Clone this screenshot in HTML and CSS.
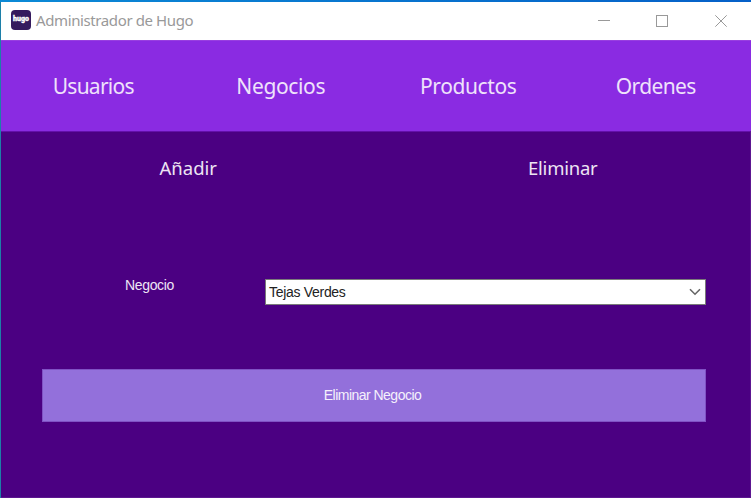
FILE: index.html
```html
<!DOCTYPE html>
<html lang="es">
<head>
<meta charset="utf-8">
<title>Administrador de Hugo</title>
<link rel="stylesheet" href="styles.css">
</head>
<body>
<div class="window">
  <header class="titlebar">
    <span class="logo">hugo</span>
    <span class="title">Administrador de Hugo</span>
    <div class="controls">
      <svg width="12" height="12" viewBox="0 0 12 12" shape-rendering="crispEdges"><path d="M0 5.5H12"/></svg>
      <svg width="12" height="12" viewBox="0 0 12 12" shape-rendering="crispEdges"><path d="M.5 .5H11.5V11.5H.5Z"/></svg>
      <svg width="12" height="12" viewBox="0 0 12 12"><path d="M.3 .3L11.7 11.7M11.7 .3L.3 11.7"/></svg>
    </div>
  </header>
  <nav class="nav">
    <a class="usuarios">Usuarios</a><a class="negocios">Negocios</a><a class="productos">Productos</a><a class="ordenes">Ordenes</a>
  </nav>
  <main class="panel">
    <div class="tabs"><a class="anadir">Añadir</a><a class="eliminar">Eliminar</a></div>
    <div class="field">
      <label class="label">Negocio</label>
      <div class="combo"><span>Tejas Verdes</span>
        <svg width="12" height="8" viewBox="0 0 12 8"><path d="M1 1.2L6 6.2L11 1.2"/></svg>
      </div>
    </div>
    <button class="action"><span>Eliminar Negocio</span></button>
  </main>
</div>
</body>
</html>
```
FILE: styles.css
```css
* { box-sizing: border-box; }
body { margin: 0; font-family: "Noto Sans", sans-serif; }
.window {
  width: 751px;
  height: 498px;
  padding: 2px 0 0 1px;
  overflow: hidden;
  display: flex;
  flex-direction: column;
  background: linear-gradient(90deg, #0b8ad6, #0560c8) 0 0 / 100% 2px no-repeat, #1c7fa8;
}
.titlebar {
  height: 38px;
  flex: none;
  display: flex;
  align-items: center;
  padding: 0 24px 2px 10px;
  background: #fff;
}
.logo {
  width: 20px;
  height: 20px;
  border-radius: 4px;
  background: #351a5e;
  color: #fff;
  font: 900 7px/18px Roboto, sans-serif;
  text-align: center;
  -webkit-text-stroke: 0.3px #fff;
}
.title {
  margin-left: 5px;
  font-size: 15px;
  line-height: 20px;
  letter-spacing: -0.39px;
  color: #999;
}
.controls { display: flex; gap: 46px; margin-left: auto; padding-top: 2px; }
svg { display: block; fill: none; }
.controls svg { stroke: #999; stroke-width: 1; }
.controls svg:nth-child(2) { margin: 0 1px 0 0; }
.nav {
  height: 91px;
  flex: none;
  display: grid;
  grid-template-columns: repeat(4, 1fr);
  align-items: center;
  text-align: center;
  background: #8a2be2;
  border-top: 1px solid #983fe0;
  color: #efe2fb;
  font-size: 21px;
  line-height: 28px;
}
.usuarios { letter-spacing: -0.75px; padding-right: 3px; }
.negocios { letter-spacing: -0.35px; padding-right: 3px; }
.productos { letter-spacing: -0.4px; padding-right: 3px; }
.ordenes { letter-spacing: -0.6px; padding-right: 3px; }
.panel {
  flex: 1;
  display: flex;
  flex-direction: column;
  background: #4b0082;
  border-top: 1px solid #6410aa;
  border-right: 1px solid #5c1690;
  border-bottom: 1px solid #5c1690;
}
.tabs {
  height: 72px;
  flex: none;
  display: grid;
  grid-template-columns: 1fr 1fr;
  align-items: center;
  text-align: center;
  color: #ede4f3;
  font-size: 18.5px;
  line-height: 26px;
}
.eliminar { letter-spacing: -0.25px; }
.field {
  display: flex;
  margin: 75px 44px 0 124px;
  font-family: "Liberation Sans", sans-serif;
  font-size: 14px;
}
.label { width: 140px; line-height: 12px; color: #eee5f5; letter-spacing: -0.35px; }
.combo {
  flex: 1;
  height: 26px;
  display: flex;
  align-items: center;
  justify-content: space-between;
  padding: 0 4px 0 3px;
  border: 1px solid #7a7a7a;
  background: #fff;
  color: #222;
  letter-spacing: -0.3px;
}
.combo svg { stroke: #666; stroke-width: 1.6; }
.action {
  height: 53px;
  margin: 64px 44px 0 41px;
  padding: 0 3px 2px 0;
  border: 1px solid #8052c4;
  background: #9370db;
  color: #f5f0fc;
  font: 14px "Liberation Sans", sans-serif;
  letter-spacing: -0.52px;
}
```
